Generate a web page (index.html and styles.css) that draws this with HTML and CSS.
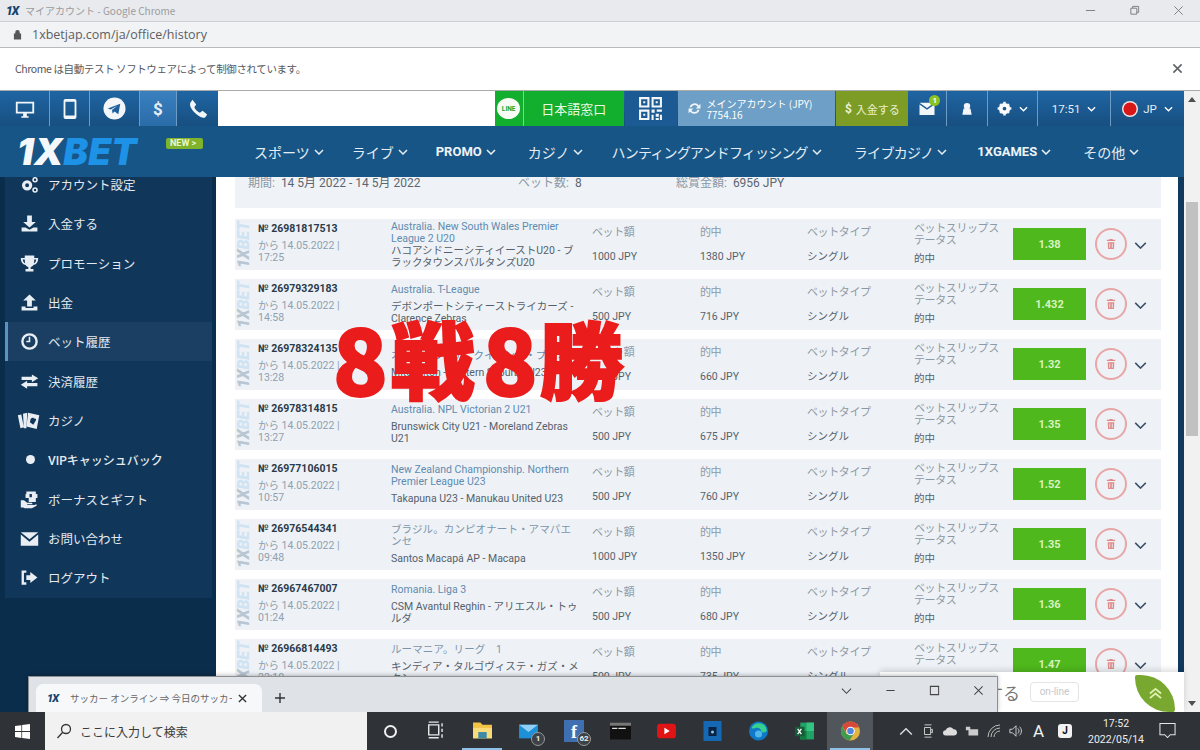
FILE: index.html
```html
<!DOCTYPE html>
<html lang="ja">
<head>
<meta charset="utf-8">
<title>マイアカウント</title>
<link rel="stylesheet" href="styles.css">
</head>
<body>
<div class="page">
  <header class="titlebar">
    <span class="fav">1X</span><span class="title-text">マイアカウント - Google Chrome</span>
    <span class="win-controls">
      <svg class="wc" viewBox="0 0 12 12"><path d="M1 6h10" /></svg>
      <svg class="wc" viewBox="0 0 12 12"><path d="M2 3.500h6.500V10H2zM4 3.500V1.500h6.500V8H8.500" /></svg>
      <svg class="wc" viewBox="0 0 12 12"><path d="M1.500 1.500l9 9M10.500 1.500l-9 9" /></svg>
    </span>
  </header>
  <div class="addressbar">
    <svg class="lock" viewBox="0 0 10 12"><path d="M2.500 5V3.500a2.500 2.500 0 0 1 5 0V5H9v6.500H1V5z" /></svg>
    <span>1xbetjap.com/ja/office/history</span>
  </div>
  <div class="infobar">
    <span>Chrome は自動テスト ソフトウェアによって制御されています。</span>
    <svg class="info-close" viewBox="0 0 12 12"><path d="M1.500 1.500l9 9M10.500 1.500l-9 9" /></svg>
  </div>

  <div class="viewport">
    <div class="site">
      <div class="topbar">
        <div class="top-left">
          <a class="tb w50"><svg viewBox="0 0 24 24" class="ic"><path d="M2 4h20v13H2zM4 6v9h16V6zM8 20h8v1.500H8zM10 17h4v3h-4z" fill-rule="evenodd"/></svg></a>
          <a class="tb w39"><svg viewBox="0 0 24 24" class="ic"><path d="M7 1h10a2 2 0 0 1 2 2v18a2 2 0 0 1-2 2H7a2 2 0 0 1-2-2V3a2 2 0 0 1 2-2zM7 4v15h10V4z" fill-rule="evenodd"/></svg></a>
          <a class="tb w49"><svg viewBox="0 0 24 24" class="ic big"><circle cx="12" cy="12" r="11.500"/><path d="M5 12l13-5-2 11-4-3-2 2.200-.6-3.700 5.600-4.500-7 4z" fill="#1c5f9c"/></svg></a>
          <a class="tb w37 lit"><span class="dollar">$</span></a>
          <a class="tb w41"><svg viewBox="0 0 24 24" class="ic"><path d="M6 2l4 5-2 3c1 2.500 3.500 5 6 6l3-2 5 4-2 3c-2 1.500-6 0-10-3.500C5.500 13.500 2.500 9 3.500 5.500z"/></svg></a>
        </div>
        <div class="top-spacer"></div>
        <a class="line-box">
          <span class="line-ic"><span>LINE</span></span>
          <span class="line-text">日本語窓口</span>
        </a>
        <a class="qr">
          <svg viewBox="0 0 24 24" class="qr-ic"><path d="M1 1h10v10H1zM3 3v6h6V3zM5 5h2v2H5zM13 1h10v10H13zM15 3v6h6V3zM17 5h2v2h-2zM1 13h10v10H1zM3 15v6h6v-6zM5 17h2v2H5zM13 13h3v3h-3zM18 13h5v2h-5zM13 18h2v5h-2zM17 17h3v3h-3zM21 18h2v5h-2zM17 21h3v2h-3z" fill-rule="evenodd"/></svg>
        </a>
        <a class="account">
          <svg viewBox="0 0 24 24" class="refresh"><path d="M4 10a8.500 8.500 0 0 1 15-3l2.500-2.500V12H14l3-3a5.500 5.500 0 0 0-10 1zM20 14a8.500 8.500 0 0 1-15 3l-2.500 2.500V12H10l-3 3a5.500 5.500 0 0 0 10-1z"/></svg>
          <span class="acc-text"><span>メインアカウント (JPY)</span><span>7754.16</span></span>
        </a>
        <a class="deposit"><span class="dep-dollar">$</span> 入金する</a>
        <a class="tb w38 mail">
          <svg viewBox="0 0 24 24" class="ic"><path d="M2 6l10 7 10-7v14H2zM2 3.500h20L12 10.500z"/></svg>
          <span class="badge">1</span>
        </a>
        <a class="tb w41"><svg viewBox="0 0 24 24" class="ic small"><circle cx="12" cy="7" r="5.500"/><path d="M6 11h12l2 11H4z"/></svg></a>
        <a class="tb w50"><svg viewBox="0 0 24 24" class="ic gear"><circle cx="12" cy="12" r="6" fill="none" stroke="#fff" stroke-width="6"/><path d="M10 1h4v4h-4zM10 19h4v4h-4zM1 10h4v4H1zM19 10h4v4h-4zM3.500 6.300l2.800-2.800 2.800 2.800-2.800 2.800zM14.900 17.700l2.800-2.800 2.800 2.800-2.800 2.800zM17.700 3.500l2.800 2.800-2.800 2.800-2.800-2.800zM6.300 14.900l2.800 2.800-2.800 2.800-2.800-2.800z"/></svg><svg viewBox="0 0 10 6" class="chev"><path d="M1 1l4 4 4-4"/></svg></a>
        <a class="tb w73"><span class="tb-label">17:51</span><svg viewBox="0 0 10 6" class="chev"><path d="M1 1l4 4 4-4"/></svg></a>
        <a class="tb w73"><span class="flag"></span><span class="tb-label">JP</span><svg viewBox="0 0 10 6" class="chev"><path d="M1 1l4 4 4-4"/></svg></a>
      </div>

      <nav class="mainnav">
        <div class="logo"><span class="logo-1x">1X</span><span class="logo-bet">BET</span></div>
        <span class="new-tag">NEW &gt;</span>
        <ul class="navlist">
          <li class="n-sport">スポーツ<svg viewBox="0 0 10 6" class="chev"><path d="M1 1l4 4 4-4"/></svg></li>
          <li class="n-live">ライブ<svg viewBox="0 0 10 6" class="chev"><path d="M1 1l4 4 4-4"/></svg></li>
          <li class="n-promo strong">PROMO<svg viewBox="0 0 10 6" class="chev"><path d="M1 1l4 4 4-4"/></svg></li>
          <li class="n-casino">カジノ<svg viewBox="0 0 10 6" class="chev"><path d="M1 1l4 4 4-4"/></svg></li>
          <li class="n-hunt">ハンティングアンドフィッシング<svg viewBox="0 0 10 6" class="chev"><path d="M1 1l4 4 4-4"/></svg></li>
          <li class="n-lc">ライブカジノ<svg viewBox="0 0 10 6" class="chev"><path d="M1 1l4 4 4-4"/></svg></li>
          <li class="n-games strong">1XGAMES<svg viewBox="0 0 10 6" class="chev"><path d="M1 1l4 4 4-4"/></svg></li>
          <li class="n-more">その他<svg viewBox="0 0 10 6" class="chev"><path d="M1 1l4 4 4-4"/></svg></li>
        </ul>
      </nav>

      <main class="main">
        <aside class="sidebar">
          <ul class="side-panel">
            <li class="side-item"><svg viewBox="0 0 24 24" class="side-ic"><circle cx="9" cy="13" r="4.500" fill="none" stroke="#e8eef3" stroke-width="4"/><circle cx="19" cy="6" r="2.500" fill="none" stroke="#e8eef3" stroke-width="2"/><circle cx="19" cy="19" r="2.500" fill="none" stroke="#e8eef3" stroke-width="2"/></svg>アカウント設定</li>
            <li class="side-item"><svg viewBox="0 0 24 24" class="side-ic"><path d="M9 2h6v8h5l-8 7-8-7h5zM2 17h5l5 3 5-3h5v5H2z"/></svg>入金する</li>
            <li class="side-item"><svg viewBox="0 0 24 24" class="side-ic"><path d="M6 2h12v3h5c0 5-2 8-6 9-1 1.500-2 2-3.500 2.500V19H17v3H7v-3h3.500v-2.500C9 16 8 15.500 7 14c-4-1-6-4-6-9h5zM3.500 7c.3 2.500 1.300 4 3 4.800C6.200 10.500 6 9 6 7zM18 7c0 2-.2 3.500-.5 4.800 1.700-.8 2.700-2.300 3-4.800z" fill-rule="evenodd"/></svg>プロモーション</li>
            <li class="side-item"><svg viewBox="0 0 24 24" class="side-ic"><path d="M12 2l8 7.500h-5V17H9V9.500H4zM2 17h5v2h10v-2h5v5H2z"/></svg>出金</li>
            <li class="side-item active"><svg viewBox="0 0 24 24" class="side-ic"><circle cx="12" cy="12" r="9" fill="none" stroke="#e8eef3" stroke-width="3"/><path d="M11 6h2v7H8v-2h3z"/></svg>ベット履歴</li>
            <li class="side-item"><svg viewBox="0 0 24 24" class="side-ic"><path d="M15 3l8 5-8 5v-3H2V6h13zM9 11v3h13v4H9v3l-8-5z"/></svg>決済履歴</li>
            <li class="side-item wide-ic"><svg viewBox="0 0 28 24" class="side-ic-w"><path d="M1 6l4-1 3 15-4 1zM7 4l5-1-1 18-3 0z"/><path d="M13 3l13 3-3 16-12-3zM16 10c2-2 4-1 4 0 1-1 3 0 2 2l-3 5-4-3z" fill-rule="evenodd"/></svg>カジノ</li>
            <li class="side-item vip"><span class="dot"></span>VIPキャッシュバック</li>
            <li class="side-item"><svg viewBox="0 0 24 24" class="side-ic"><path d="M8 2h12v3h2v5h-2v5h-9v-5H7V5h1zM12 5v4h3V5zM1 13h4l4 3h6l1 2H9v1h9l3-1v2l-6 3H6l-2-1H1z" fill-rule="evenodd"/></svg>ボーナスとギフト</li>
            <li class="side-item"><svg viewBox="0 0 24 24" class="side-ic"><path d="M1 4h22L12 13zM1 7l11 9 11-9v14H1z"/></svg>お問い合わせ</li>
            <li class="side-item"><svg viewBox="0 0 24 24" class="side-ic"><path d="M8 3H2v18h6v-3H5V6h3zM13 5l9 7-9 7v-4H8V9h5z"/></svg>ログアウト</li>
          </ul>
        </aside>

        <section class="content">
          <div class="summary">
            <span class="sum-a"><span class="muted">期間:</span>&nbsp; 14 5月 2022 - 14 5月 2022</span>
            <span class="sum-b"><span class="muted">ベット数:</span>&nbsp; 8</span>
            <span class="sum-c"><span class="muted">総賞金額:</span>&nbsp; 6956 JPY</span>
          </div>

          <div class="bets">
            <article class="bet">
              <div class="wm"><span>1X</span>BET</div>
              <div class="b-id"><b>№ 26981817513</b><span>から 14.05.2022 | 17:25</span></div>
              <div class="b-ev"><span class="league tight">Australia. New South Wales Premier League 2 U20</span><span class="teams">ハコアシドニーシティイーストU20 - ブラックタウンスパルタンズU20</span></div>
              <div class="b-col c-stake"><span>ベット額</span><em>1000 JPY</em></div>
              <div class="b-col c-win"><span>的中</span><em>1380 JPY</em></div>
              <div class="b-col c-type"><span>ベットタイプ</span><em>シングル</em></div>
              <div class="b-col c-status"><span>ベットスリップステータス</span><em>的中</em></div>
              <div class="odds">1.38</div>
              <div class="trash"><svg viewBox="0 0 12 14"><path d="M4 1h4v1h3v1.500H1V2h3zM2 5h8l-.5 8h-7zM4 6.500v5h1v-5zM7 6.500v5h1v-5z" fill-rule="evenodd"/></svg></div>
              <svg class="more" viewBox="0 0 14 8"><path d="M1 1l6 6 6-6"/></svg>
            </article>
            <article class="bet">
              <div class="wm"><span>1X</span>BET</div>
              <div class="b-id"><b>№ 26979329183</b><span>から 14.05.2022 | 14:58</span></div>
              <div class="b-ev"><span class="league">Australia. T-League</span><span class="teams">デボンポートシティーストライカーズ - Clarence Zebras</span></div>
              <div class="b-col c-stake"><span>ベット額</span><em>500 JPY</em></div>
              <div class="b-col c-win"><span>的中</span><em>716 JPY</em></div>
              <div class="b-col c-type"><span>ベットタイプ</span><em>シングル</em></div>
              <div class="b-col c-status"><span>ベットスリップステータス</span><em>的中</em></div>
              <div class="odds">1.432</div>
              <div class="trash"><svg viewBox="0 0 12 14"><path d="M4 1h4v1h3v1.500H1V2h3zM2 5h8l-.5 8h-7zM4 6.500v5h1v-5zM7 6.500v5h1v-5z" fill-rule="evenodd"/></svg></div>
              <svg class="more" viewBox="0 0 14 8"><path d="M1 1l6 6 6-6"/></svg>
            </article>
            <article class="bet">
              <div class="wm"><span>1X</span>BET</div>
              <div class="b-id"><b>№ 26978324135</b><span>から 14.05.2022 | 13:28</span></div>
              <div class="b-ev"><span class="league">オーストラリア。クイーンズ・プレミア</span><span class="teams">Mitchelton - Eastern Suburbs U23</span></div>
              <div class="b-col c-stake"><span>ベット額</span><em>500 JPY</em></div>
              <div class="b-col c-win"><span>的中</span><em>660 JPY</em></div>
              <div class="b-col c-type"><span>ベットタイプ</span><em>シングル</em></div>
              <div class="b-col c-status"><span>ベットスリップステータス</span><em>的中</em></div>
              <div class="odds">1.32</div>
              <div class="trash"><svg viewBox="0 0 12 14"><path d="M4 1h4v1h3v1.500H1V2h3zM2 5h8l-.5 8h-7zM4 6.500v5h1v-5zM7 6.500v5h1v-5z" fill-rule="evenodd"/></svg></div>
              <svg class="more" viewBox="0 0 14 8"><path d="M1 1l6 6 6-6"/></svg>
            </article>
            <article class="bet">
              <div class="wm"><span>1X</span>BET</div>
              <div class="b-id"><b>№ 26978314815</b><span>から 14.05.2022 | 13:27</span></div>
              <div class="b-ev"><span class="league">Australia. NPL Victorian 2 U21</span><span class="teams">Brunswick City U21 - Moreland Zebras U21</span></div>
              <div class="b-col c-stake"><span>ベット額</span><em>500 JPY</em></div>
              <div class="b-col c-win"><span>的中</span><em>675 JPY</em></div>
              <div class="b-col c-type"><span>ベットタイプ</span><em>シングル</em></div>
              <div class="b-col c-status"><span>ベットスリップステータス</span><em>的中</em></div>
              <div class="odds">1.35</div>
              <div class="trash"><svg viewBox="0 0 12 14"><path d="M4 1h4v1h3v1.500H1V2h3zM2 5h8l-.5 8h-7zM4 6.500v5h1v-5zM7 6.500v5h1v-5z" fill-rule="evenodd"/></svg></div>
              <svg class="more" viewBox="0 0 14 8"><path d="M1 1l6 6 6-6"/></svg>
            </article>
            <article class="bet">
              <div class="wm"><span>1X</span>BET</div>
              <div class="b-id"><b>№ 26977106015</b><span>から 14.05.2022 | 10:57</span></div>
              <div class="b-ev"><span class="league">New Zealand Championship. Northern Premier League U23</span><span class="teams">Takapuna U23 - Manukau United U23</span></div>
              <div class="b-col c-stake"><span>ベット額</span><em>500 JPY</em></div>
              <div class="b-col c-win"><span>的中</span><em>760 JPY</em></div>
              <div class="b-col c-type"><span>ベットタイプ</span><em>シングル</em></div>
              <div class="b-col c-status"><span>ベットスリップステータス</span><em>的中</em></div>
              <div class="odds">1.52</div>
              <div class="trash"><svg viewBox="0 0 12 14"><path d="M4 1h4v1h3v1.500H1V2h3zM2 5h8l-.5 8h-7zM4 6.500v5h1v-5zM7 6.500v5h1v-5z" fill-rule="evenodd"/></svg></div>
              <svg class="more" viewBox="0 0 14 8"><path d="M1 1l6 6 6-6"/></svg>
            </article>
            <article class="bet">
              <div class="wm"><span>1X</span>BET</div>
              <div class="b-id"><b>№ 26976544341</b><span>から 14.05.2022 | 09:48</span></div>
              <div class="b-ev"><span class="league jp">ブラジル。カンピオナート・アマパエンセ</span><span class="teams">Santos Macapá AP - Macapa</span></div>
              <div class="b-col c-stake"><span>ベット額</span><em>1000 JPY</em></div>
              <div class="b-col c-win"><span>的中</span><em>1350 JPY</em></div>
              <div class="b-col c-type"><span>ベットタイプ</span><em>シングル</em></div>
              <div class="b-col c-status"><span>ベットスリップステータス</span><em>的中</em></div>
              <div class="odds">1.35</div>
              <div class="trash"><svg viewBox="0 0 12 14"><path d="M4 1h4v1h3v1.500H1V2h3zM2 5h8l-.5 8h-7zM4 6.500v5h1v-5zM7 6.500v5h1v-5z" fill-rule="evenodd"/></svg></div>
              <svg class="more" viewBox="0 0 14 8"><path d="M1 1l6 6 6-6"/></svg>
            </article>
            <article class="bet">
              <div class="wm"><span>1X</span>BET</div>
              <div class="b-id"><b>№ 26967467007</b><span>から 14.05.2022 | 01:24</span></div>
              <div class="b-ev"><span class="league">Romania. Liga 3</span><span class="teams">CSM Avantul Reghin - アリエスル・トゥルダ</span></div>
              <div class="b-col c-stake"><span>ベット額</span><em>500 JPY</em></div>
              <div class="b-col c-win"><span>的中</span><em>680 JPY</em></div>
              <div class="b-col c-type"><span>ベットタイプ</span><em>シングル</em></div>
              <div class="b-col c-status"><span>ベットスリップステータス</span><em>的中</em></div>
              <div class="odds">1.36</div>
              <div class="trash"><svg viewBox="0 0 12 14"><path d="M4 1h4v1h3v1.500H1V2h3zM2 5h8l-.5 8h-7zM4 6.500v5h1v-5zM7 6.500v5h1v-5z" fill-rule="evenodd"/></svg></div>
              <svg class="more" viewBox="0 0 14 8"><path d="M1 1l6 6 6-6"/></svg>
            </article>
            <article class="bet">
              <div class="wm"><span>1X</span>BET</div>
              <div class="b-id"><b>№ 26966814493</b><span>から 14.05.2022 | 22:10</span></div>
              <div class="b-ev"><span class="league jp">ルーマニア。リーグ　1</span><span class="teams">キンディア・タルゴヴィステ・ガズ・メタン</span></div>
              <div class="b-col c-stake"><span>ベット額</span><em>500 JPY</em></div>
              <div class="b-col c-win"><span>的中</span><em>735 JPY</em></div>
              <div class="b-col c-type"><span>ベットタイプ</span><em>シングル</em></div>
              <div class="b-col c-status"><span>ベットスリップステータス</span><em>的中</em></div>
              <div class="odds">1.47</div>
              <div class="trash"><svg viewBox="0 0 12 14"><path d="M4 1h4v1h3v1.500H1V2h3zM2 5h8l-.5 8h-7zM4 6.500v5h1v-5zM7 6.500v5h1v-5z" fill-rule="evenodd"/></svg></div>
              <svg class="more" viewBox="0 0 14 8"><path d="M1 1l6 6 6-6"/></svg>
            </article>
          </div>
          <div class="stamp"><span class="s8 s8a">8</span><span class="s-k1">戦</span><span class="s8 s8b">8</span><span>勝</span></div>
        </section>
        <div class="edge"></div>
      </main>
    </div>
    <div class="scrollbar">
      <svg class="sb-arrow" viewBox="0 0 8 5"><path d="M4 0l4 5H0z"/></svg>
      <div class="sb-track"><div class="sb-thumb"></div></div>
      <svg class="sb-arrow" viewBox="0 0 8 5"><path d="M0 0h8L4 5z"/></svg>
    </div>
  </div>

  <footer class="taskbar">
    <div class="start"><svg viewBox="0 0 16 16"><path d="M0 2.200l6.800-1v6.300H0zM7.600 1l8.400-1v7.500H7.600zM0 8.400h6.800v6.400L0 13.800zM7.600 8.400H16V16l-8.400-1.200z"/></svg></div>
    <div class="search">
      <svg viewBox="0 0 16 16"><circle cx="10" cy="6" r="4.500"/><path d="M6.700 9.300L1.500 15"/></svg>
      <span>ここに入力して検索</span>
    </div>
    <div class="tcell"><span class="cortana"></span></div>
    <div class="tcell"><svg class="t-ic" viewBox="0 0 18 18"><path d="M2 1h9M2 3.500h9v9H2zM2 15h9M14 2v3M14 7v3M14 12v3" fill="none" stroke="#e6e6e6" stroke-width="1.300"/></svg></div>
    <div class="tcell on"><svg class="t-ic" viewBox="0 0 20 18"><path d="M1 1h7l2 2h9v13H1z" fill="#f3c346"/><path d="M1 6h18v10H1z" fill="#f8dc7c"/><path d="M6 10h8v6H6z" fill="#3c8aa8"/></svg></div>
    <div class="tcell"><svg class="t-ic" viewBox="0 0 20 16"><path d="M1 2h18v13H1z" fill="#1e90d8"/><path d="M1 2l9 7 9-7z" fill="#8fd0f5"/></svg><span class="t-badge">1</span></div>
    <div class="tcell"><span class="fb">f</span><span class="t-badge">62</span></div>
    <div class="tcell"><svg class="t-ic" viewBox="0 0 20 18"><path d="M0 1h20v16H0z" fill="#111"/><path d="M0 1h20v3H0z" fill="#777"/><path d="M2 6h5v1H2zM8 6h7v1H8z" fill="#ddd"/></svg></div>
    <div class="tcell"><svg class="t-ic" viewBox="0 0 20 18"><rect x="1" y="2" width="18" height="14" rx="3" fill="#e01414"/><path d="M8 6l5 3-5 3z" fill="#fff"/></svg></div>
    <div class="tcell"><svg class="t-ic" viewBox="0 0 20 20"><path d="M1 0h18v20H1z" fill="#1569b4"/><path d="M6 6h8v9H6z" fill="#0a2340"/><circle cx="10" cy="11" r="1.500" fill="#8cc8f0"/></svg></div>
    <div class="tcell"><svg class="t-ic" viewBox="0 0 20 20"><circle cx="10" cy="10" r="9.500" fill="#0f78c8"/><path d="M3 7a8 8 0 0 1 15 1c1 3-2 4-5 3 0-3-3-5-6-4-2 .6-3 1-4 0z" fill="#36d08c"/><circle cx="10" cy="13" r="3.500" fill="#4fb8e8"/></svg></div>
    <div class="tcell"><svg class="t-ic" viewBox="0 0 20 18"><path d="M6 1h13v16H6z" fill="#21a366"/><path d="M12 1h7v8h-7z" fill="#33c481"/><path d="M6 9h6v8H6z" fill="#107c41"/><path d="M1 5h9v9H1z" fill="#185c37"/><path d="M3.500 7l3.500 5M7 7l-3.500 5" stroke="#fff" stroke-width="1.200"/></svg></div>
    <div class="tcell active"><svg class="t-ic chrome" viewBox="0 0 20 20"><circle cx="10" cy="10" r="9.500" fill="#e3b341"/><path d="M10 .5A9.500 9.500 0 0 0 1.800 5.300L6 12l4-5.500h8.500A9.500 9.500 0 0 0 10 .5z" fill="#d6493a"/><path d="M1.800 5.300A9.500 9.500 0 0 0 9 19.500L13 13H6z" fill="#3e9b4f"/><circle cx="10" cy="10" r="4.300" fill="#fff"/><circle cx="10" cy="10" r="3.300" fill="#4f87e0"/></svg></div>
    <div class="tray">
      <svg class="tr" viewBox="0 0 12 8"><path d="M1 7l5-5 5 5" fill="none" stroke="#ddd" stroke-width="1.200"/></svg>
      <svg class="tr" viewBox="0 0 12 16"><path d="M2 1h8M2 15h8M2 4h7v8H2zM9 7l2-1v4l-2-1" fill="none" stroke="#ddd"/></svg>
      <svg class="tr" viewBox="0 0 16 10"><path d="M3 10a3 3 0 0 1 0-6 5 5 0 0 1 9-1 3.500 3.500 0 0 1 1 7z" fill="#ddd"/></svg>
      <svg class="tr" viewBox="0 0 16 12"><path d="M1 1h5v4H1zM4 4h11v7H4z" fill="#ccc"/></svg>
      <svg class="tr" viewBox="0 0 14 14"><path d="M1 13a12 12 0 0 1 12-12M4 13a9 9 0 0 1 9-9M7 13a6 6 0 0 1 6-6" fill="none" stroke="#bbb"/></svg>
      <svg class="tr" viewBox="0 0 16 14"><path d="M1 5h3l4-4v12l-4-4H1zM10 4c2 2 2 4 0 6M12 2c3 3 3 7 0 10" fill="none" stroke="#ddd"/></svg>
      <span class="ime">A</span>
      <span class="ime-j">J</span>
    </div>
    <div class="clock"><span>17:52</span><span>2022/05/14</span></div>
    <svg class="notify" viewBox="0 0 18 18"><path d="M1 1.500h16v12h-5l-3 3-3-3H1z" fill="none" stroke="#e6e6e6" stroke-width="1.100"/></svg>
  </footer>

  <div class="chat">
    <span class="chat-text">する</span>
    <span class="online">on-line</span>
    <span class="leaf"><svg viewBox="0 0 16 14"><path d="M2 7l6-5 6 5M2 12l6-5 6 5" fill="none" stroke="#dff0b0" stroke-width="2"/></svg></span>
  </div>

  <div class="float-win">
    <div class="tab">
      <span class="fav tab-fav">1X</span>
      <span class="tab-title">サッカー オンライン ⇒ 今日のサッカー試</span>
      <svg class="tab-x" viewBox="0 0 10 10"><path d="M1 1l8 8M9 1l-8 8"/></svg>
    </div>
    <svg class="tab-plus" viewBox="0 0 12 12"><path d="M6 1v10M1 6h10"/></svg>
    <div class="fw-controls">
      <svg class="fw" viewBox="0 0 12 12"><path d="M1 4l5 5 5-5"/></svg>
      <svg class="fw" viewBox="0 0 12 12"><path d="M1.500 6h9"/></svg>
      <svg class="fw" viewBox="0 0 12 12"><path d="M1.500 1.500h9v9h-9z"/></svg>
      <svg class="fw" viewBox="0 0 12 12"><path d="M1.500 1.500l9 9M10.500 1.500l-9 9"/></svg>
    </div>
  </div>
</div>
</body>
</html>
```

FILE: styles.css
```css
* { box-sizing: border-box; margin: 0; padding: 0; }
html, body { width: 1200px; height: 750px; overflow: hidden; }
body { font-family: Roboto, "Noto Sans CJK JP", sans-serif; background: #fff; color: #333; }
ul { list-style: none; }
svg { display: block; flex: none; }
em { font-style: normal; }

.page { position: relative; width: 1200px; height: 750px; display: flex; flex-direction: column; overflow: hidden; }

/* browser chrome */
.titlebar { height: 22px; flex: none; background: #e9eaee; display: flex; align-items: center; padding-left: 6px; border-bottom: 1px solid #cfd0d3; }
.fav { font: italic 900 12px Roboto, sans-serif; color: #14456e; width: 19px; letter-spacing: -1px; }
.title-text { font: 10px "Noto Sans CJK JP", sans-serif; color: #9a9ca0; }
.win-controls { margin-left: auto; display: flex; gap: 33px; padding-right: 16px; }
.wc { width: 11px; height: 11px; fill: none; stroke: #77797c; stroke-width: 1; }
.addressbar { height: 26px; flex: none; background: #f2f3f5; display: flex; align-items: center; padding-left: 13px; gap: 10px; font: 12.500px "Open Sans", sans-serif; color: #5c5f63; border-bottom: 1px solid #b9babc; }
.lock { width: 9px; height: 11px; fill: #55585b; }
.infobar { height: 43px; flex: none; background: #fff; display: flex; align-items: center; justify-content: space-between; padding: 0 17px 2px 15px; font: 10.500px "Noto Sans CJK JP", sans-serif; letter-spacing: -.4px; color: #55585c; border-bottom: 1px solid #a8aaac; }
.info-close { width: 11px; height: 11px; fill: none; stroke: #5f6266; stroke-width: 1.700; }

.viewport { flex: 1; display: flex; min-height: 0; }
.site { width: 1184px; display: flex; flex-direction: column; }

/* top bar */
.topbar { height: 35px; flex: none; display: flex; background: linear-gradient(#1f65a3, #174f80); align-items: stretch; }
.top-left { display: flex; }
.tb { display: flex; align-items: center; justify-content: center; gap: 4px; color: #fff; border-right: 1px solid #6d9cc4; position: relative; }
.w50 { width: 50px; } .w39 { width: 40px; } .w49 { width: 50px; } .w37 { width: 37px; } .w41 { width: 41px; } .w38 { width: 39px; } .w73 { width: 73px; }
.w73:last-child { border-right: 0; }
.top-left .tb:last-child { border-right: 0; }
.lit { background: linear-gradient(#3a80bf, #2a6ca8); }
.ic { width: 22px; height: 22px; fill: #f3f6f9; }
.ic.big { width: 23px; height: 23px; }
.ic.small { width: 14px; height: 14px; }
.ic.gear { width: 15px; height: 15px; }
.dollar { font: 700 17px Roboto, sans-serif; color: #e4eef6; }
.chev { width: 9px; height: 6px; fill: none; stroke: currentColor; stroke-width: 1.500; margin-left: 3px; }
.top-spacer { width: 277px; background: #fff; }
.line-box { width: 129px; background: #12ae2e; display: flex; align-items: center; }
.line-ic { width: 29px; height: 100%; display: flex; align-items: center; justify-content: center; border-right: 1px solid #7fd48f; }
.line-ic span { width: 23px; height: 21px; border-radius: 50%; background: #f6fbf4; color: #18a82e; font: 700 6.500px Roboto, sans-serif; display: flex; align-items: center; justify-content: center; }
.line-text { flex: 1; text-align: center; font: 13px "Noto Sans CJK JP", sans-serif; color: #e8f8e0; }
.qr { width: 52px; background: #1c5a94; margin-left: 1px; display: flex; align-items: center; justify-content: center; }
.qr-ic { width: 25px; height: 25px; fill: #f2f6f9; }
.account { width: 158px; background: #6e9fc6; margin-left: 1px; display: flex; align-items: center; gap: 5px; padding-left: 9px; color: #fff; }
.refresh { width: 15px; height: 15px; fill: #f3f6f9; }
.acc-text { display: flex; flex-direction: column; font: 10px/11px "Noto Sans CJK JP", sans-serif; }
.deposit { width: 72px; background: #7d9c25; margin-left: 1px; color: #e8f0cf; font: 11px "Noto Sans CJK JP", sans-serif; display: flex; align-items: center; justify-content: center; gap: 4px; }
.dep-dollar { font: 700 12px Roboto, sans-serif; }
.mail .ic { width: 18px; height: 18px; }
.badge { position: absolute; top: 4px; left: 21px; width: 11px; height: 11px; border-radius: 50%; background: #8cc21f; color: #fff; font: 700 8px/11px Roboto, sans-serif; text-align: center; }
.tb-label { font: 11.500px Roboto, sans-serif; color: #e6eef5; }
.flag { width: 16px; height: 16px; border-radius: 50%; background: radial-gradient(circle, #d81818 55%, #f3e2e2 60%); margin-right: 1px; }

/* nav */
.mainnav { height: 51px; flex: none; background: #175586; display: flex; align-items: center; padding-left: 17px; }
.logo { font: italic 900 37px/1 Inter, Roboto, sans-serif; letter-spacing: .2px; width: 124px; white-space: nowrap; }
.logo-1x { color: #f5f8fb; }
.logo-bet { color: #1e92e6; }
.new-tag { align-self: flex-start; margin: 12px 0 0 25px; background: #7fb32c; color: #eef6cf; font: 700 9px/11px Roboto, sans-serif; padding: 0 4px; border-radius: 2px; width: 37px; height: 11px; white-space: nowrap; }
.navlist { display: flex; align-items: center; margin-left: 51px; gap: 28px; font: 14px "Noto Sans CJK JP", sans-serif; color: #e4edf4; white-space: nowrap; }
.navlist li { display: flex; align-items: center; }
.navlist .chev { margin-left: 4px; width: 10px; }
.navlist .strong { font: 700 13px Roboto, sans-serif; color: #eef3f7; margin-right: 4px; }
.navlist .n-hunt { letter-spacing: -.8px; margin-right: 4px; }
.navlist .n-lc { letter-spacing: -.7px; margin-right: 2px; }

/* main */
.main { flex: 1; min-height: 0; display: flex; overflow: hidden; }
.sidebar { width: 216px; flex: none; background: #0a2d4c; padding: 0 4px 0 5px; }
.side-panel { background: #10365a; margin-top: -12px; padding-bottom: 1px; }
.side-item { height: 39.300px; display: flex; align-items: center; gap: 9px; padding-left: 15px; font: 12.500px "Noto Sans CJK JP", sans-serif; color: #e3e9ef; position: relative; }
.side-ic { width: 19px; height: 19px; fill: #e8eef3; margin-top: 0; }
.side-item.wide-ic { padding-left: 12px; gap: 7px; }
.side-ic-w { width: 24px; height: 21px; fill: #e8eef3; }
.side-item.active { background: #1b3f62; }
.side-item.active::before { content: ""; position: absolute; left: 0; top: 0; bottom: 0; width: 3px; background: #5b93c4; }
.side-item.vip { padding-left: 21px; gap: 13px; font-family: Roboto, "Noto Sans CJK JP", sans-serif; font-weight: 500; font-size: 12px; }
.dot { width: 9px; height: 9px; border-radius: 50%; background: #e8eef3; }

.content { width: 962px; flex: none; background: #fff; padding: 0 17px 0 19px; position: relative; }
.edge { flex: 1; background: #0f3a5e; }
.summary { height: 31px; background: #eff3f7; position: relative; display: flex; font-size: 12px; color: #5b6670; padding-left: 13px; margin-bottom: 11px; }
.summary span { line-height: 13px; }
.muted { color: #8b98a5; }
.sum-a { width: 270px; } .sum-b { width: 158px; }
.bets { display: flex; flex-direction: column; gap: 9px; }
.bet { height: 51px; flex: none; background: #eef2f6; display: flex; align-items: stretch; position: relative; font-size: 10.500px; }
.wm { width: 23px; flex: none; font: italic 900 16px/15px Roboto, sans-serif; writing-mode: vertical-rl; transform: rotate(180deg); text-align: center; color: #cfe3f3; letter-spacing: -.2px; padding-right: 1px; }
.wm span { color: #b8c6d2; }
.b-id { width: 133px; flex: none; display: flex; flex-direction: column; padding: 3px 30px 0 0; }
.b-id b { color: #2b3a4c; font-weight: 700; line-height: 13px; white-space: nowrap; margin-bottom: 5px; }
.b-id span { color: #8fa0b0; line-height: 12px; }
.b-ev { width: 201px; flex: none; display: flex; flex-direction: column; justify-content: center; padding-right: 11px; line-height: 12px; }
.league { color: #5f8bb0; margin-bottom: 5px; }
.league.jp { font-size: 10.500px; letter-spacing: .1px; color: #7d95ab; }
.league.tight { margin-bottom: 0; }
.teams { color: #56606c; }
.b-col { flex: none; display: flex; flex-direction: column; padding-top: 7px; }
.b-col span { color: #8e99a5; font-size: 11px; line-height: 14px; letter-spacing: -.4px; }
.b-col em { color: #56616d; margin-top: 10px; line-height: 14px; }
.c-stake { width: 108px; } .c-win { width: 107px; } .c-type { width: 107px; }
.c-status { width: 99px; padding-top: 4px; padding-right: 11px; }
.c-status span { line-height: 12px; }
.c-status em { margin-top: 5px; }
.odds { width: 73px; height: 32px; margin-top: 9px; background: #4fb81c; color: #d9f3bf; font: 700 11px/33px Roboto, sans-serif; text-align: center; }
.trash { width: 32px; height: 32px; margin: 9px 0 0 9px; border: 2px solid #e8a6a6; border-radius: 50%; display: flex; align-items: center; justify-content: center; }
.trash svg { width: 10px; height: 12px; fill: #e08a8a; }
.more { width: 13px; height: 7px; margin: 23px 0 0 7px; fill: none; stroke: #3a5068; stroke-width: 1.700; }
.stamp { position: absolute; left: 117px; top: 130px; display: flex; align-items: center; height: 100px; font: 900 84px/100px "Noto Sans CJK JP", sans-serif; color: #ea1c1c; white-space: nowrap; -webkit-text-stroke: 2px #ea1c1c; }
.s8 { font-size: 90px; }
.s8a { margin-right: 3px; }
.s-k1 { margin-right: 8px; }
.s8b { margin-right: 2px; }

/* scrollbar */
.scrollbar { width: 16px; flex: none; background: #f1f1f1; display: flex; flex-direction: column; align-items: center; }
.sb-arrow { width: 8px; height: 5px; fill: #505050; margin: 6px 0; }
.sb-track { flex: 1; width: 100%; padding: 94px 2px 0; }
.sb-thumb { height: 234px; background: #c1c1c1; }

/* taskbar */
.taskbar { height: 38px; flex: none; background: #2f3338; display: flex; align-items: stretch; position: relative; z-index: 3; }
.start { width: 45px; display: flex; align-items: center; justify-content: center; }
.start svg { width: 15px; height: 15px; fill: #fff; }
.search { width: 322px; background: #f1f1f1; display: flex; align-items: center; gap: 8px; padding-left: 11px; font: 12px "Noto Sans CJK JP", sans-serif; color: #3a3a3a; }
.search svg { width: 16px; height: 16px; fill: none; stroke: #333; stroke-width: 1.300; }
.tcell { width: 46px; display: flex; align-items: center; justify-content: center; position: relative; }
.tcell.on::after, .tcell.active::after { content: ""; position: absolute; bottom: 0; left: 3px; right: 3px; height: 2px; background: #8fc1e8; }
.tcell.active { background: #50565c; }
.t-ic { width: 21px; height: 20px; }
.cortana { width: 13px; height: 13px; border: 2px solid #f0f0f0; border-radius: 50%; }
.t-badge { position: absolute; right: 6px; bottom: 4px; min-width: 14px; height: 14px; padding: 0 1px; border-radius: 7px; background: #3c4248; border: 1px solid #999; color: #f0f0f0; font: 700 8px/12px Roboto, sans-serif; text-align: center; }
.fb { width: 20px; height: 22px; background: #3f6fb0; color: #fff; font: 700 18px/24px "Liberation Serif", serif; text-align: center; }
.tray { width: 210px; padding-left: 26px; display: flex; align-items: center; }
.tr { width: 14px; height: 14px; margin-right: 8px; }
.ime { font: 17px/20px Roboto, sans-serif; color: #f0f0f0; margin-right: 14px; margin-left: 2px; }
.ime-j { width: 14px; height: 14px; background: #f2f2f2; border-radius: 3px; color: #111; font: 700 10px/14px Roboto, sans-serif; text-align: center; }
.clock { width: 66px; display: flex; flex-direction: column; align-items: center; justify-content: center; gap: 3px; font: 10.500px/13px Roboto, sans-serif; color: #eee; }
.notify { width: 17px; height: 17px; margin: 10px 0 0 10px; }

/* floating elements */
.chat { position: absolute; left: 880px; top: 672px; width: 304px; height: 40px; background: #fff; z-index: 1; display: flex; align-items: center; box-shadow: 0 -2px 6px rgba(0,0,0,.15); }
.chat-text { margin-left: 106px; font: 17px "Noto Sans CJK JP", sans-serif; color: #777; }
.online { margin-left: 10px; width: 49px; height: 20px; border: 1px solid #e4e4e4; border-radius: 4px; font: 10px/18px Roboto, sans-serif; color: #c4c8cc; text-align: center; }
.leaf { position: absolute; left: 255px; top: 3px; width: 40px; height: 37px; background: #79a830; border-radius: 2px 36px 3px 36px; display: flex; align-items: center; justify-content: center; }
.leaf svg { width: 15px; height: 13px; }

.float-win { position: absolute; left: 28px; top: 676px; width: 970px; height: 36px; background: #dfe3e8; border: 1px solid #8d9093; border-bottom: 0; z-index: 2; display: flex; align-items: flex-end; padding-left: 7px; box-shadow: 0 -1px 4px rgba(0,0,0,.25); }
.tab { width: 226px; height: 28px; background: #f7f8fa; border-radius: 7px 7px 0 0; display: flex; align-items: center; padding-left: 11px; }
.tab-fav { width: 23px; font-size: 11px; }
.tab-title { width: 162px; overflow: hidden; white-space: nowrap; font: 9.500px "Noto Sans CJK JP", sans-serif; color: #666; }
.tab-x { width: 9px; height: 9px; margin-left: 6px; fill: none; stroke: #333; stroke-width: 1.500; }
.tab-plus { width: 12px; height: 12px; margin: 0 0 8px 12px; fill: none; stroke: #333; stroke-width: 1.400; }
.fw-controls { position: absolute; left: 812px; top: 8px; display: flex; gap: 33px; }
.fw { width: 11px; height: 11px; fill: none; stroke: #444; stroke-width: 1.100; }
```
